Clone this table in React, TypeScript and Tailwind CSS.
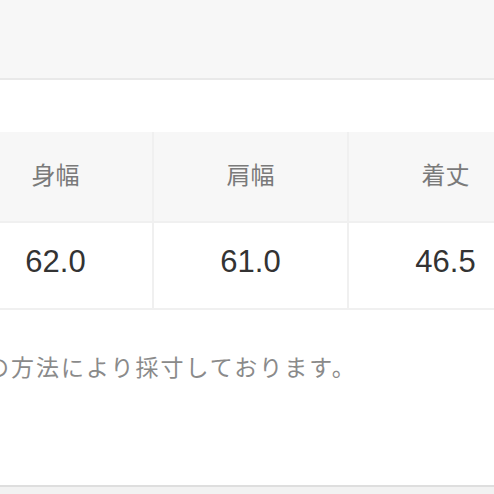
import React from "react";

const cols = [
  { h: "身幅", v: "62.0" },
  { h: "肩幅", v: "61.0" },
  { h: "着丈", v: "46.5" },
];

export default function App() {
  return (
    <div className="w-[494px] h-[494px] overflow-hidden flex flex-col bg-white">
      <div className="h-[78px] bg-[#f7f7f7] shrink-0" />
      <div className="h-[2px] bg-[#e9e9e9] shrink-0" />
      <div className="h-[405px] shrink-0 bg-white overflow-hidden">
        <div className="mt-[52px] ml-[-41px] w-max grid grid-cols-[193px_193px_193px] grid-rows-[89px_85px] gap-[2px] pb-[2px] bg-[#f0f0f0]">
          {cols.map((c) => (
            <div
              key={c.h}
              className="bg-[#f7f7f7] flex items-center justify-center pb-[6px] text-[24px] text-[#7a7a7a]"
              style={{ fontFamily: '"Noto Sans CJK JP", sans-serif' }}
            >
              {c.h}
            </div>
          ))}
          {cols.map((c) => (
            <div
              key={c.v}
              className="bg-white flex items-center justify-center pb-[6px] text-[31px] text-[#333333]"
              style={{ fontFamily: '"Liberation Sans", Arial, sans-serif' }}
            >
              {c.v}
            </div>
          ))}
        </div>
        <p
          className="mt-[40px] ml-[-14px] text-[23px] leading-[32px] tracking-[2px] text-[#8a8a8a] whitespace-nowrap"
          style={{ fontFamily: '"Noto Sans CJK JP", sans-serif' }}
        >
          の方法により採寸しております。
        </p>
      </div>
      <div className="h-[2px] bg-[#dedede] shrink-0" />
      <div className="flex-1 bg-[#f2f2f2]" />
    </div>
  );
}
